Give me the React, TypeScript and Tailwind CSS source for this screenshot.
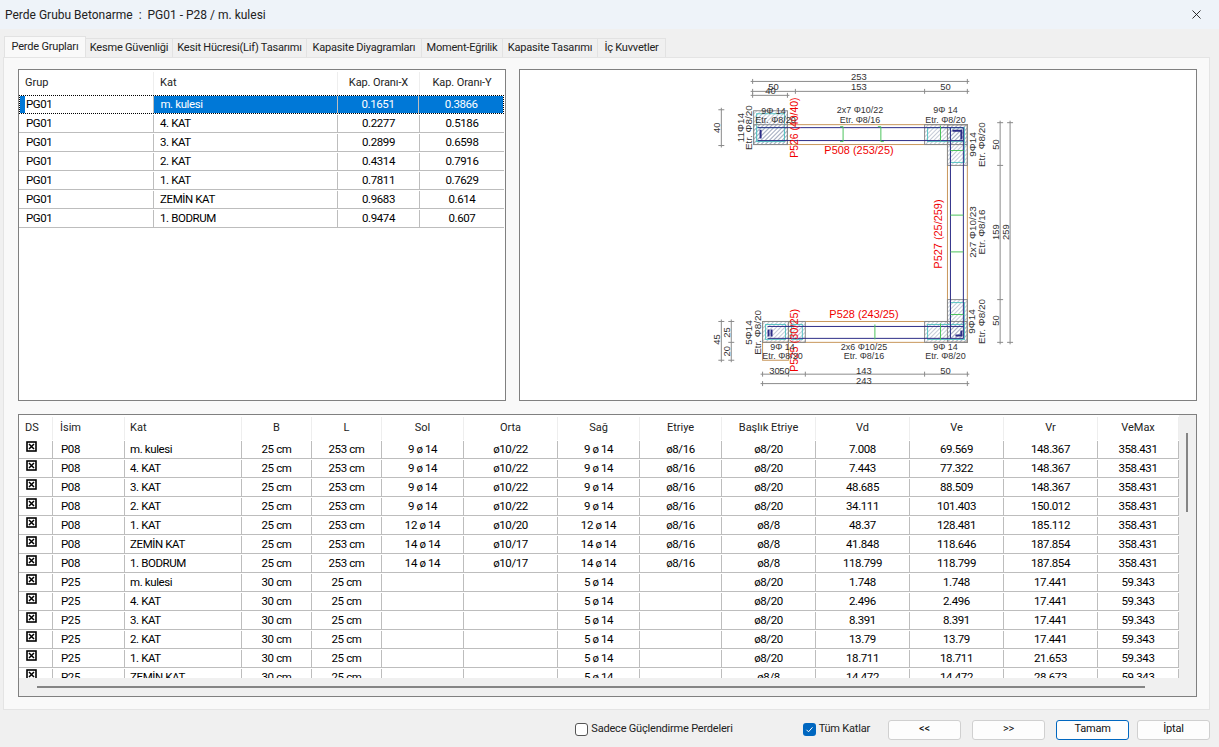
import { X } from 'lucide-react';

const tabs = [
  { label: 'Perde Grupları', w: 'w-[82px]' },
  { label: 'Kesme Güvenliği', w: 'w-[87px]' },
  { label: 'Kesit Hücresi(Lif) Tasarımı', w: 'w-[134px]' },
  { label: 'Kapasite Diyagramları', w: 'w-[115px]' },
  { label: 'Moment-Eğrilik', w: 'w-[81px]' },
  { label: 'Kapasite Tasarımı', w: 'w-[95px]' },
  { label: 'İç Kuvvetler', w: 'w-[68px]' },
];

const groupRows = [
  ['PG01', 'm. kulesi', '0.1651', '0.3866'],
  ['PG01', '4. KAT', '0.2277', '0.5186'],
  ['PG01', '3. KAT', '0.2899', '0.6598'],
  ['PG01', '2. KAT', '0.4314', '0.7916'],
  ['PG01', '1. KAT', '0.7811', '0.7629'],
  ['PG01', 'ZEMİN KAT', '0.9683', '0.614'],
  ['PG01', '1. BODRUM', '0.9474', '0.607'],
];

const wallCols = [
  { label: 'İsim', w: 'w-[72px]', head: 'pl-[7px]', cell: 'pl-[8px]' },
  { label: 'Kat', w: 'w-[117px]', head: 'pl-[5px]', cell: 'pl-[5px]' },
  { label: 'B', w: 'w-[70px]', head: 'justify-center', cell: 'justify-center' },
  { label: 'L', w: 'w-[70px]', head: 'justify-center', cell: 'justify-center' },
  { label: 'Sol', w: 'w-[82px]', head: 'justify-center', cell: 'justify-center' },
  { label: 'Orta', w: 'w-[94px]', head: 'justify-center', cell: 'justify-center' },
  { label: 'Sağ', w: 'w-[82px]', head: 'justify-center', cell: 'justify-center' },
  { label: 'Etriye', w: 'w-[82px]', head: 'justify-center', cell: 'justify-center' },
  { label: 'Başlık Etriye', w: 'w-[94px]', head: 'justify-center', cell: 'justify-center' },
  { label: 'Vd', w: 'w-[94px]', head: 'justify-center', cell: 'justify-center' },
  { label: 'Ve', w: 'w-[94px]', head: 'justify-center', cell: 'justify-center' },
  { label: 'Vr', w: 'w-[94px]', head: 'justify-center', cell: 'justify-center' },
  { label: 'VeMax', w: 'w-[81px]', head: 'justify-center', cell: 'justify-center' },
];

const wallRows = [
  ['P08', 'm. kulesi', '25 cm', '253 cm', '9 ø 14', 'ø10/22', '9 ø 14', 'ø8/16', 'ø8/20', '7.008', '69.569', '148.367', '358.431'],
  ['P08', '4. KAT', '25 cm', '253 cm', '9 ø 14', 'ø10/22', '9 ø 14', 'ø8/16', 'ø8/20', '7.443', '77.322', '148.367', '358.431'],
  ['P08', '3. KAT', '25 cm', '253 cm', '9 ø 14', 'ø10/22', '9 ø 14', 'ø8/16', 'ø8/20', '48.685', '88.509', '148.367', '358.431'],
  ['P08', '2. KAT', '25 cm', '253 cm', '9 ø 14', 'ø10/22', '9 ø 14', 'ø8/16', 'ø8/20', '34.111', '101.403', '150.012', '358.431'],
  ['P08', '1. KAT', '25 cm', '253 cm', '12 ø 14', 'ø10/20', '12 ø 14', 'ø8/16', 'ø8/8', '48.37', '128.481', '185.112', '358.431'],
  ['P08', 'ZEMİN KAT', '25 cm', '253 cm', '14 ø 14', 'ø10/17', '14 ø 14', 'ø8/16', 'ø8/8', '41.848', '118.646', '187.854', '358.431'],
  ['P08', '1. BODRUM', '25 cm', '253 cm', '14 ø 14', 'ø10/17', '14 ø 14', 'ø8/16', 'ø8/8', '118.799', '118.799', '187.854', '358.431'],
  ['P25', 'm. kulesi', '30 cm', '25 cm', '', '', '5 ø 14', '', 'ø8/20', '1.748', '1.748', '17.441', '59.343'],
  ['P25', '4. KAT', '30 cm', '25 cm', '', '', '5 ø 14', '', 'ø8/20', '2.496', '2.496', '17.441', '59.343'],
  ['P25', '3. KAT', '30 cm', '25 cm', '', '', '5 ø 14', '', 'ø8/20', '8.391', '8.391', '17.441', '59.343'],
  ['P25', '2. KAT', '30 cm', '25 cm', '', '', '5 ø 14', '', 'ø8/20', '13.79', '13.79', '17.441', '59.343'],
  ['P25', '1. KAT', '30 cm', '25 cm', '', '', '5 ø 14', '', 'ø8/20', '18.711', '18.711', '21.653', '59.343'],
  ['P25', 'ZEMİN KAT', '30 cm', '25 cm', '', '', '5 ø 14', '', 'ø8/8', '14.472', '14.472', '28.673', '59.343'],
];

function GroupTable() {
  return (
    <div className="w-[488px] h-full border border-[#808080] bg-white shrink-0 overflow-hidden">
      <div className="flex h-[25px] items-center pt-[2px] text-[11px] text-[#222]">
        <div className="w-[135px] pl-[6px] h-full flex items-center border-r border-[#eee]">Grup</div>
        <div className="w-[184px] pl-[6px] h-full flex items-center border-r border-[#eee]">Kat</div>
        <div className="w-[82px] h-full flex items-center justify-center border-r border-[#eee] tracking-[-0.1px]">Kap. Oranı-X</div>
        <div className="w-[84px] h-full flex items-center justify-center tracking-[-0.1px]">Kap. Oranı-Y</div>
      </div>
      {groupRows.map((row, i) => (
        <div key={i} className={`flex w-[485px] h-[19px] items-center text-[11.5px] tracking-[-0.4px] ${i === 0 ? 'border border-dotted border-black' : 'border-b border-[#bdbdbd] pt-px'}`}>
          <div className={`w-[135px] h-full flex items-center border-r border-[#bdbdbd] ${i === 0 ? 'pl-0' : 'pl-[7px]'}`}>
            {i === 0 && <span className="w-[5px] h-full bg-[#0078d7] mr-px" />}
            {row[0]}
          </div>
          <div className={`w-[184px] pl-[6px] h-full flex items-center border-r border-[#bdbdbd] ${i === 0 ? 'bg-[#0078d7] text-white' : ''}`}>{row[1]}</div>
          <div className={`w-[82px] h-full flex items-center justify-center border-r border-[#bdbdbd] ${i === 0 ? 'bg-[#0078d7] text-white' : ''}`}>{row[2]}</div>
          <div className={`w-[84px] h-full flex items-center justify-center ${i === 0 ? 'bg-[#0078d7] text-white' : ''}`}>{row[3]}</div>
        </div>
      ))}
    </div>
  );
}

function HDim({ x1, x2, y, ticks = [] }: { x1: number; x2: number; y: number; ticks?: number[] }) {
  return (
    <g stroke="#8a8a8a" strokeWidth="1">
      <line x1={x1 - 2} x2={x2 + 2} y1={y} y2={y} />
      {[x1, x2, ...ticks].map((t) => (
        <line key={t} x1={t} x2={t} y1={y - 2.5} y2={y + 2.5} />
      ))}
    </g>
  );
}

function VDim({ y1, y2, x, ticks = [] }: { y1: number; y2: number; x: number; ticks?: number[] }) {
  return (
    <g stroke="#8a8a8a" strokeWidth="1">
      <line x1={x} x2={x} y1={y1 - 2} y2={y2 + 2} />
      {[y1, y2, ...ticks].map((t) => (
        <line key={t} x1={x - 3} x2={x + 3} y1={t} y2={t} />
      ))}
    </g>
  );
}

function T({ x, y, c = '#333', s = 9.5, r, children }: { x: number; y: number; c?: string; s?: number; r?: boolean; children: string }) {
  return (
    <text x={x} y={y} fill={c} fontSize={s} textAnchor="middle" transform={r ? `rotate(-90 ${x} ${y})` : undefined}>
      {children}
    </text>
  );
}

function Block({ x, y, w, h }: { x: number; y: number; w: number; h: number }) {
  return (
    <g>
      <rect x={x} y={y} width={w} height={h} fill="url(#hatch)" stroke="#8a8a8a" />
      <rect x={x + 3} y={y + 3} width={w - 6} height={h - 6} fill="none" stroke="#58c4c4" />
    </g>
  );
}

function Section() {
  return (
    <svg viewBox="519 69 678 332" className="w-full h-full" fontFamily="'Liberation Sans', sans-serif">
      <defs>
        <pattern id="hatch" width="3" height="3" patternUnits="userSpaceOnUse" patternTransform="rotate(-45)">
          <line x1="0" y1="0" x2="3" y2="0" stroke="#8c97b0" strokeWidth="1" />
        </pattern>
      </defs>

      {/* outer walls */}
      <g fill="none" stroke="#c8965a" strokeWidth="1">
        <rect x="787" y="124" width="181" height="20" />
        <rect x="948" y="124" width="20" height="219" />
        <rect x="762" y="322" width="206" height="21" />
        <rect x="762" y="343" width="26" height="18" />
      </g>

      {/* confined ends */}
      <Block x={753} y={110} w={34} h={34} />
      <Block x={753} y={124} w={34} h={20} />
      <Block x={925} y={124} w={43} h={20} />
      <Block x={948} y={124} w={20} h={41} />
      <Block x={948} y={300} w={20} h={43} />
      <Block x={925} y={322} w={43} h={21} />
      <Block x={762} y={322} w={26} h={21} />
      <Block x={788} y={322} w={17} h={21} />

      {/* bars */}
      <g stroke="#2b2b86" strokeWidth="1" fill="none">
        <line x1="757" x2="964" y1="127" y2="127" />
        <line x1="757" x2="964" y1="140" y2="140" />
        <line x1="951" x2="951" y1="127" y2="339" />
        <line x1="964" x2="964" y1="127" y2="339" />
        <line x1="767" x2="964" y1="327" y2="327" />
        <line x1="767" x2="964" y1="339" y2="339" />
        <path d="M953 130h9v9M760 129v9M768 330v7M771 330v7M956 336h6v-5" strokeWidth="2" />
      </g>

      {/* ties */}
      <g stroke="#4cc45c" strokeWidth="1" fill="none">
        <path d="M840 126h3v15h-3M878 126h3v15h3M941 125v15M875 325v15M941 324v16" />
        <path d="M951 150h13M951 215h13M951 252h13M951 315h13" />
      </g>

      {/* dimensions */}
      <HDim x1={752} x2={968} y={80.5} />
      <HDim x1={752} x2={968} y={90.5} ticks={[795, 925]} />
      <HDim x1={752} x2={787} y={94.5} />
      <VDim x={720.5} y1={109} y2={145} />
      <HDim x1={762} x2={968} y={375} ticks={[788, 805, 925]} />
      <HDim x1={762} x2={968} y={384.5} />
      <VDim x={720.5} y1={322} y2={361} />
      <VDim x={730.5} y1={322} y2={361} ticks={[343]} />
      <VDim x={1001} y1={122} y2={343} ticks={[165, 300]} />
      <VDim x={1011} y1={122} y2={343} />

      <T x={859} y={79}>253</T>
      <T x={773} y={89}>50</T>
      <T x={859} y={89}>153</T>
      <T x={946} y={89}>50</T>
      <T x={770} y={93}>40</T>
      <T x={719} y={127} r>40</T>
      <T x={774} y={375}>30</T>
      <T x={784} y={375}>50</T>
      <T x={864} y={375}>143</T>
      <T x={946} y={375}>50</T>
      <T x={864} y={385}>243</T>
      <T x={719} y={340} r>45</T>
      <T x={729} y={333} r>25</T>
      <T x={729} y={352} r>20</T>
      <T x={1000} y={144} r>50</T>
      <T x={1000} y={232} r>159</T>
      <T x={1000} y={321} r>50</T>
      <T x={1010} y={232} r>259</T>

      {/* wall names */}
      <T x={798} y={127} c="#f00000" s={10.5} r>P526 (40/40)</T>
      <T x={859} y={154} c="#f00000" s={11}>P508 (253/25)</T>
      <T x={943} y={234} c="#f00000" s={11} r>P527 (25/259)</T>
      <T x={864} y={319} c="#f00000" s={11}>P528 (243/25)</T>
      <T x={798} y={341} c="#f00000" s={11} r>P525 (30/25)</T>

      {/* reinforcement notes */}
      <T x={773} y={113} s={9}>9Φ 14</T>
      <T x={775} y={122} s={9}>Etr. Φ8/20</T>
      <T x={860} y={112} s={9}>2x7 Φ10/22</T>
      <T x={860} y={122} s={9}>Etr. Φ8/16</T>
      <T x={946} y={112} s={9}>9Φ 14</T>
      <T x={946} y={122} s={9}>Etr. Φ8/20</T>
      <T x={743} y={127} s={10} r>11Φ14</T>
      <T x={751} y={127} s={10} r>Etr. Φ8/20</T>
      <T x={977} y={144} s={10} r>9Φ14</T>
      <T x={986} y={144} s={10} r>Etr. Φ8/20</T>
      <T x={977} y={232} s={10} r>2x7 Φ10/23</T>
      <T x={986} y={232} s={10} r>Etr. Φ8/16</T>
      <T x={751} y={333} s={10} r>5Φ14</T>
      <T x={760} y={333} s={10} r>Etr. Φ8/20</T>
      <T x={976} y={322} s={10} r>9Φ14</T>
      <T x={986} y={322} s={10} r>Etr. Φ8/20</T>
      <T x={782} y={351} s={9}>9Φ 14</T>
      <T x={782} y={360} s={9}>Etr. Φ8/20</T>
      <T x={864} y={351} s={9}>2x6 Φ10/25</T>
      <T x={864} y={360} s={9}>Etr. Φ8/16</T>
      <T x={946} y={351} s={9}>9Φ 14</T>
      <T x={946} y={360} s={9}>Etr. Φ8/20</T>
    </svg>
  );
}

function CrossBox() {
  return (
    <svg width="11" height="11" viewBox="0 0 11 11" className="absolute left-[7px] top-0">
      <rect x="1" y="1" width="9" height="9" fill="white" stroke="black" strokeWidth="1.6" />
      <path d="M3 3l5 5M8 3l-5 5" stroke="black" strokeWidth="1.5" />
    </svg>
  );
}

function WallTable() {
  return (
    <div className="relative h-[283px] border border-[#808080] bg-[#f0f0f0] overflow-hidden">
      <div className="flex h-[263px]">
        <div className="w-[1160px] bg-white overflow-hidden shrink-0">
          <div className="flex h-[25px] items-center pt-[2px] text-[11px] text-[#222]">
            <div className="w-[34px] pl-[6px] h-full flex items-center border-r border-[#eee]">DS</div>
            {wallCols.map((c) => (
              <div key={c.label} className={`${c.w} ${c.head} h-full flex items-center border-r border-[#eee]`}>
                {c.label}
              </div>
            ))}
          </div>
          {wallRows.map((row, i) => (
            <div key={i} className="flex h-[19px] items-center border-b border-[#bdbdbd] pt-px text-[11.5px] tracking-[-0.4px]">
              <div className="relative w-[34px] h-full border-r border-[#bdbdbd]">
                <CrossBox />
              </div>
              {row.map((v, j) => (
                <div key={j} className={`${wallCols[j].w} ${wallCols[j].cell} h-full flex items-center border-r border-[#bdbdbd]`}>
                  {v}
                </div>
              ))}
            </div>
          ))}
        </div>
      </div>
      {/* scrollbars */}
      <div className="absolute right-[8px] top-[18px] w-[2px] h-[79px] bg-[#858585]" />
      <div className="absolute left-[18px] right-[51px] bottom-[8px] h-[2px] bg-[#858585]" />
    </div>
  );
}

function FooterButton({ label, primary }: { label: string; primary?: boolean }) {
  return (
    <button className={`w-[73px] h-[20px] rounded-[3px] bg-[#fdfdfd] text-[11px] text-[#111] flex items-center justify-center ${primary ? 'border-[1.5px] border-[#0067c0]' : 'border border-[#d0d0d0]'}`}>
      {label}
    </button>
  );
}

export default function App() {
  return (
    <div className="w-[1219px] h-[747px] flex flex-col bg-[#f0f0f0] font-['Roboto',sans-serif] overflow-hidden">
      {/* Title bar */}
      <div className="h-[29px] shrink-0 bg-[#eef3f9] flex items-center justify-between pl-[5px] pr-[15px]">
        <span className="text-[12px] text-[#222] whitespace-pre">Perde Grubu Betonarme  :  PG01 - P28 / m. kulesi</span>
        <X size={15} strokeWidth={1.4} className="text-[#111]" />
      </div>

      {/* Tabs */}
      <div className="h-[28px] shrink-0 flex items-end pl-[4px]">
        {tabs.map((t, i) => (
          <div
            key={t.label}
            className={`${t.w} flex items-center justify-center text-[11px] tracking-[-0.2px] text-[#222] whitespace-nowrap border-t border-r border-[#e2e2e2] ${i === 0 ? 'h-[21px] bg-[#f9f9f9] border-l' : 'h-[19px] bg-[#f0f0f0] pt-px'}`}
          >
            {t.label}
          </div>
        ))}
      </div>

      {/* Panel */}
      <div className="ml-[3px] mr-[9px] h-[653px] shrink-0 bg-[#f9f9f9] border border-[#e4e4e4] pl-[14px] pr-[12px] pt-[11px] flex flex-col gap-[13px]">
        <div className="h-[332px] flex gap-[13px] shrink-0">
          <GroupTable />
          <div className="flex-1 h-full border border-[#808080] bg-white">
            <Section />
          </div>
        </div>
        <WallTable />
      </div>

      {/* Footer */}
      <div className="flex-1 flex items-center justify-end pr-[9px] pt-[2px] text-[11px] tracking-[-0.2px] text-[#222]">
        <span className="w-[13px] h-[13px] rounded-[3px] border border-[#555] bg-white mr-[3px]" />
        <span className="mr-[70px]">Sadece Güçlendirme Perdeleri</span>
        <span className="w-[13px] h-[13px] rounded-[3px] bg-[#0067c0] mr-[3px] flex items-center justify-center">
          <svg width="9" height="9" viewBox="0 0 9 9">
            <path d="M1.5 4.8l2 2 4-4.5" stroke="white" strokeWidth="1" fill="none" />
          </svg>
        </span>
        <span className="mr-[18px]">Tüm Katlar</span>
        <div className="flex gap-[11px] mr-[8px]">
          <FooterButton label="<<" />
          <FooterButton label=">>" />
          <FooterButton label="Tamam" primary />
        </div>
        <FooterButton label="İptal" />
      </div>
    </div>
  );
}
